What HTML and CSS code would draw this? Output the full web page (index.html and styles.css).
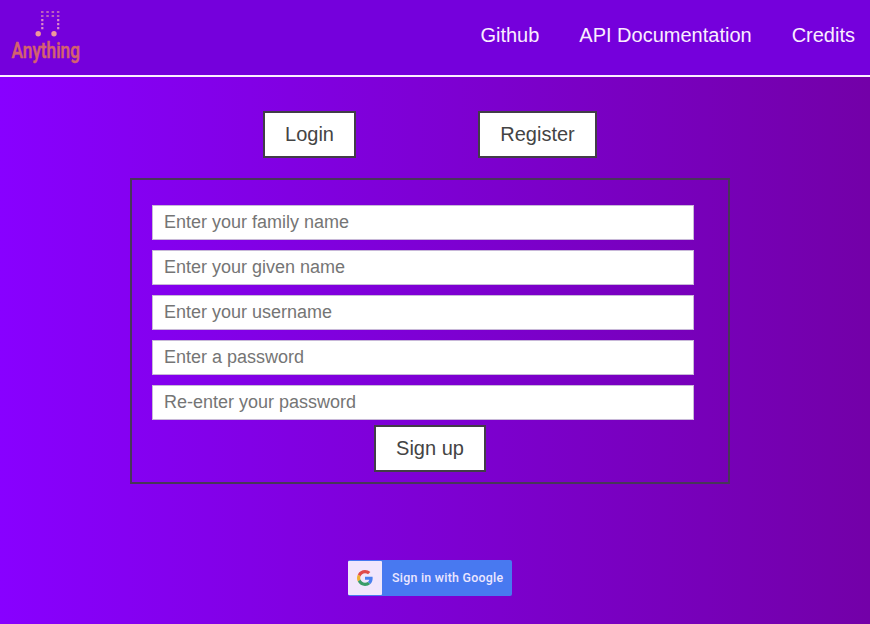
FILE: index.html
```html
<!DOCTYPE html>
<html lang="en">
<head>
<meta charset="utf-8">
<title>Anything</title>
<link rel="stylesheet" href="styles.css">
</head>
<body>
<header class="navbar">
  <a class="logo" aria-label="Anything">
    <svg width="90" height="75" viewBox="0 0 90 75">
      <g class="note-stem">
        <path d="M41 12H60M41 16H60" stroke-dasharray="2.5 2.8"/>
        <path class="note-side" d="M42.3 19V30M58.2 19V30" stroke-dasharray="2.3 1.7"/>
      </g>
      <circle class="note-head" cx="38.2" cy="33.8" r="2.7"/>
      <circle class="note-head" cx="54" cy="33.8" r="2.7"/>
      <text class="wordmark" x="11.5" y="57.5" textLength="68.5" lengthAdjust="spacingAndGlyphs">Anything</text>
    </svg>
  </a>
  <nav class="links">
    <a>Github</a>
    <a>API Documentation</a>
    <a>Credits</a>
  </nav>
</header>
<main class="page">
  <div class="tabs">
    <button class="btn login">Login</button>
    <button class="btn register">Register</button>
  </div>
  <form class="signup">
    <input type="text" placeholder="Enter your family name">
    <input type="text" placeholder="Enter your given name">
    <input type="text" placeholder="Enter your username">
    <input type="password" placeholder="Enter a password">
    <input type="password" placeholder="Re-enter your password">
    <button class="btn submit" type="button">Sign up</button>
  </form>
  <a class="google">
    <span class="google-icon">
      <svg width="16" height="16" viewBox="0 0 48 48">
        <path fill="#e04a4a" d="M24 9.5c3.54 0 6.71 1.22 9.21 3.6l6.85-6.85C35.9 2.38 30.47 0 24 0 14.62 0 6.51 5.38 2.56 13.22l7.98 6.19C12.43 13.72 17.74 9.5 24 9.5z"/>
        <path fill="#4a80ee" d="M46.98 24.55c0-1.57-.15-3.09-.38-4.55H24v9.02h12.94c-.58 2.96-2.26 5.48-4.78 7.18l7.73 6c4.51-4.18 7.09-10.36 7.09-17.65z"/>
        <path fill="#f0b030" d="M10.53 28.59A14.5 14.5 0 0 1 9.77 24c0-1.6.27-3.14.76-4.59l-7.98-6.19A23.9 23.9 0 0 0 0 24c0 3.88.92 7.54 2.56 10.78z"/>
        <path fill="#3a9c68" d="M24 48c6.48 0 11.93-2.13 15.89-5.81l-7.73-6c-2.15 1.45-4.92 2.3-8.16 2.3-6.26 0-11.57-4.22-13.47-9.91l-7.98 6.19C6.51 42.62 14.62 48 24 48z"/>
      </svg>
    </span>
    <span class="google-label">Sign in with Google</span>
  </a>
</main>
</body>
</html>
```
FILE: styles.css
```css
* { box-sizing: border-box; }

body {
  margin: 0;
  min-height: 624px;
  font-family: "Liberation Sans", Arial, sans-serif;
  background: linear-gradient(to right, #8800ff, #7300a8);
}

.navbar {
  display: flex;
  justify-content: space-between;
  height: 77px;
  background: #7500dc;
  border-bottom: 2px solid #fbf0ff;
}

.logo svg {
  display: block;
  overflow: visible;
}

.note-stem {
  fill: none;
  stroke: #bd60bd;
  stroke-width: 2.2;
}

.note-side { stroke: #dc88c8; }

.note-head { fill: #f0989a; }

.wordmark {
  font: 500 22.5px Roboto, sans-serif;
  fill: #d4626e;
  stroke: #d4626e;
  stroke-width: 0.5;
}

.links {
  display: flex;
  gap: 40px;
  padding: 24px 15px 0 0;
  font-size: 20px;
  line-height: 23px;
  color: #faedff;
}

.page {
  display: flex;
  flex-direction: column;
  align-items: center;
  width: 860px;
  padding-top: 34px;
}

.tabs {
  display: flex;
  gap: 122px;
}

.btn {
  height: 47px;
  padding: 0;
  border: 2px solid #423d48;
  background: #fff;
  color: #444;
  font: 20px "Liberation Sans", Arial, sans-serif;
}

.login { width: 93px; }

.register { width: 119px; }

.signup {
  display: flex;
  flex-direction: column;
  gap: 10px;
  width: 600px;
  height: 306px;
  margin-top: 20px;
  padding: 25px 20px 0;
  border: 2px solid #483659;
}

.signup input {
  width: 542px;
  height: 35px;
  padding: 0 11px;
  border: 1px solid #c8b8d8;
  background: #fff;
  font: 18px "Liberation Sans", Arial, sans-serif;
}

.signup input::placeholder { color: #757575; }

.submit {
  align-self: center;
  width: 112px;
  margin-top: -5px;
}

.google {
  display: flex;
  width: 164px;
  height: 36px;
  margin-top: 76px;
  padding: 1px 0;
  border-radius: 2px;
  background: #4879f0;
}

.google-icon {
  display: flex;
  align-items: center;
  justify-content: center;
  width: 34px;
  border-radius: 1px;
  background: #f1e6fc;
}

.google-label {
  margin-left: 10px;
  font: 500 12.4px/34px Roboto, sans-serif;
  letter-spacing: 0.25px;
  color: #ece6ff;
  white-space: nowrap;
}
```
